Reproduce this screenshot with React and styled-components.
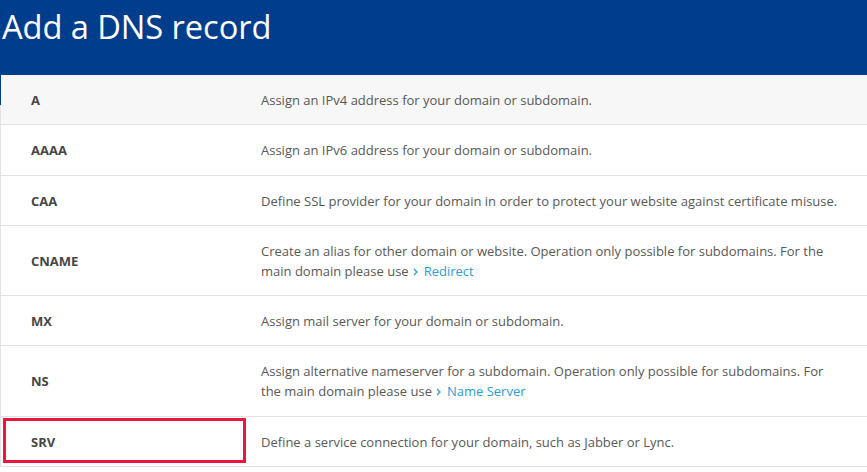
import React from 'react';
import styled, { createGlobalStyle } from 'styled-components';

const GlobalStyle = createGlobalStyle`
  body {
    margin: 0;
    background: #ffffff;
    font-family: "Open Sans", "Liberation Sans", sans-serif;
  }
`;

const Page = styled.div`
  width: 867px;
  height: 472px;
  overflow: hidden;
`;

const Header = styled.header`
  height: 75px;
  background: #003d8c;
  padding: 0 2px;
  box-sizing: border-box;
`;

const Title = styled.h1`
  margin: 0;
  padding-top: 5px;
  font-family: "Open Sans", "Liberation Sans", sans-serif;
  font-weight: 400;
  font-size: 32.7px;
  line-height: 44px;
  color: #ffffff;
  letter-spacing: -0.1px;
`;

const Table = styled.div`
  position: relative;
  border-left: 1px solid #e2e2e2;
`;

// blue tab that hangs below the header on the first row
const Marker = styled.span`
  position: absolute;
  left: -1px;
  top: 0;
  width: 2px;
  height: 30px;
  background: #003d8c;
`;

const Row = styled.div`
  position: relative;
  display: grid;
  grid-template-columns: 260px 1fr;
  align-items: center;
  padding: 15px 0 14.3px;
  border-bottom: 1px solid #e2e2e2;
  background: ${p => (p.$shaded ? '#f7f7f7' : '#ffffff')};
`;

const Type = styled.div`
  padding-left: 30px;
  font-size: 13px;
  font-weight: 700;
  line-height: 20px;
  color: #464646;
`;

const Desc = styled.div`
  padding-right: 24px;
  font-size: 13px;
  line-height: 20px;
  color: #585858;
`;

const Link = styled.a`
  margin-left: 4px;
  color: #2e9bd6;
  text-decoration: none;
  svg {
    margin-right: 6px;
    vertical-align: 0;
  }
`;

const Chevron = () => (
  <svg width="5" height="8" viewBox="0 0 5 8" fill="none">
    <path d="M1 1l3 3-3 3" stroke="#2e9bd6" strokeWidth="1.3" />
  </svg>
);

const Highlight = styled.span`
  position: absolute;
  left: 2px;
  top: 1px;
  width: 243px;
  height: 45px;
  border: 3px solid #e8173c;
  box-sizing: border-box;
`;

const records = [
  { type: 'A', desc: 'Assign an IPv4 address for your domain or subdomain.' },
  { type: 'AAAA', desc: 'Assign an IPv6 address for your domain or subdomain.' },
  { type: 'CAA', desc: 'Define SSL provider for your domain in order to protect your website against certificate misuse.' },
  { type: 'CNAME', desc: 'Create an alias for other domain or website. Operation only possible for subdomains. For the main domain please use', link: 'Redirect' },
  { type: 'MX', desc: 'Assign mail server for your domain or subdomain.' },
  { type: 'NS', desc: 'Assign alternative nameserver for a subdomain. Operation only possible for subdomains. For the main domain please use', link: 'Name Server' },
  { type: 'SRV', desc: 'Define a service connection for your domain, such as Jabber or Lync.', marked: true },
];

const App = () => (
  <Page>
    <GlobalStyle />
    <Header>
      <Title>Add a DNS record</Title>
    </Header>
    <Table>
      <Marker />
      {records.map((r, i) => (
        <Row key={r.type} $shaded={i === 0}>
          {r.marked && <Highlight />}
          <Type>{r.type}</Type>
          <Desc>
            {r.desc}
            {r.link && (
              <Link href="#">
                <Chevron />
                {r.link}
              </Link>
            )}
          </Desc>
        </Row>
      ))}
    </Table>
  </Page>
);

export default App;
